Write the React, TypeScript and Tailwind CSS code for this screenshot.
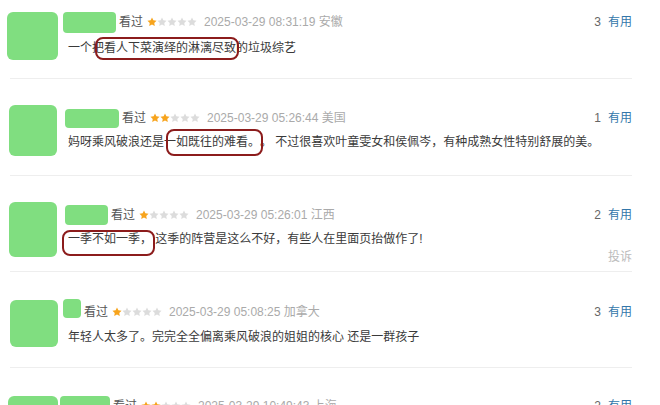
import React from 'react';

// Short comments list (douban style) with annotation boxes
type Comment = {
  wrap: string;      // item padding + fixed height
  avatar: string;    // avatar offset + size
  header: string;    // header offset
  name: string;      // name box size/offset
  body: string;      // comment line offset
  stars: number;
  time: string;
  votes: number;
  before: string;
  mark?: string;
  markBox?: string;
  after: string;
  report?: boolean;
};

const COMMENTS: Comment[] = [
  {
    wrap: 'pt-[12px] h-[79px]',
    avatar: '-ml-[3px] w-[51px] h-[48px]',
    header: 'mt-0',
    name: 'w-[53px] h-[21px]',
    body: 'mt-[8px]',
    stars: 1,
    time: '2025-03-29 08:31:19 安徽',
    votes: 3,
    before: '一个',
    mark: '把看人下菜演绎的淋漓尽致',
    markBox: 'left-[3px] -right-[3px] -top-[3px] -bottom-[4px]',
    after: '的垃圾综艺',
  },
  {
    wrap: 'pt-[26px] h-[97px]',
    avatar: '-ml-[1px] w-[48px] h-[51px]',
    header: 'mt-[3px]',
    name: 'ml-[2px] w-[54px] h-[19px]',
    body: 'mt-[6px]',
    stars: 2,
    time: '2025-03-29 05:26:44 美国',
    votes: 1,
    before: '妈呀乘风破浪还是',
    mark: '一如既往的难看。',
    markBox: 'left-[2px] -right-[3px] -top-[5px] -bottom-[6px]',
    after: '。 不过很喜欢叶童雯女和侯佩岑，有种成熟女性特别舒展的美。',
  },
  {
    wrap: 'pt-[26px] h-[96px]',
    avatar: '-ml-[1px] w-[48px] h-[55px]',
    header: 'mt-[3px]',
    name: 'ml-[2px] w-[43px] h-[20px]',
    body: 'mt-[6px]',
    stars: 1,
    time: '2025-03-29 05:26:01 江西',
    votes: 2,
    before: '',
    mark: '一季不如一季，',
    markBox: '-left-[6px] -right-[3px] -top-[1px] -bottom-[9px]',
    after: ' 这季的阵营是这么不好，有些人在里面页抬做作了!',
    report: true,
  },
  {
    wrap: 'pt-[28px] h-[96px]',
    avatar: 'w-[48px] h-[47px]',
    header: 'mt-[2px]',
    name: 'w-[18px] h-[19px] self-start -mt-[3px]',
    body: 'mt-[7px]',
    stars: 1,
    time: '2025-03-29 05:08:25 加拿大',
    votes: 3,
    before: '年轻人太多了。完完全全偏离乘风破浪的姐姐的核心 还是一群孩子',
    after: '',
  },
  {
    wrap: 'pt-[28px] h-[96px]',
    avatar: '-ml-[2px] w-[50px] h-[50px]',
    header: 'mt-0',
    name: '-ml-[3px] w-[50px] h-[20px] self-start',
    body: 'mt-[7px]',
    stars: 2,
    time: '2025-03-29 10:49:43 上海',
    votes: 2,
    before: '',
    after: '',
  },
];

const Star: React.FC<{ on: boolean }> = ({ on }) => (
  <svg width="10" height="10" viewBox="0 0 24 24" className="shrink-0">
    <path
      d="M12 1l3.3 6.8 7.6 1.1-5.5 5.3 1.3 7.5L12 18.2l-6.7 3.5 1.3-7.5L1.1 8.9l7.6-1.1z"
      fill={on ? '#f7a41d' : '#dcdcdc'}
    />
  </svg>
);

const App: React.FC = () => {
  return (
    <div
      className="w-[660px] h-[405px] overflow-hidden bg-white text-[12px]"
      style={{ fontFamily: '"Liberation Sans", "Noto Sans CJK SC", sans-serif' }}
    >
      {COMMENTS.map((c, i) => (
        <div key={i} className={`ml-[10px] w-[622px] border-b border-[#eeeeee] box-border ${c.wrap}`}>
          <div className="flex">
            {/* avatar column */}
            <div className="w-[53px] shrink-0">
              <div className={`bg-[#80de80] rounded-[6px] ${c.avatar}`} />
            </div>

            <div className="flex-1 min-w-0">
              {/* header */}
              <div className={`flex items-center h-[20px] ${c.header}`}>
                <div className={`bg-[#80de80] rounded-[4px] shrink-0 ${c.name}`} />
                <span className="ml-[3px] text-[#555]">看过</span>
                <span className="ml-[4px] flex">
                  {[0, 1, 2, 3, 4].map((s) => (
                    <Star key={s} on={s < c.stars} />
                  ))}
                </span>
                <span className="ml-[7px] text-[#aaa]">{c.time}</span>
                <span className="ml-auto text-[#666]">{c.votes}</span>
                <span className="ml-[7px] text-[#3377aa]">有用</span>
              </div>

              {/* comment text */}
              <p className={`pl-[5px] leading-[16px] text-[#3a3a3a] whitespace-pre ${c.body}`}>
                {c.before}
                {c.mark && (
                  <span className="relative inline-block">
                    {c.mark}
                    <span
                      className={`absolute border-2 border-[#8c1c1c] rounded-[8px] pointer-events-none ${c.markBox}`}
                    />
                  </span>
                )}
                {c.after}
              </p>

              {c.report && (
                <div className="mt-[2px] text-right leading-[16px] text-[#bbb]">投诉</div>
              )}
            </div>
          </div>
        </div>
      ))}
    </div>
  );
};

export default App;
